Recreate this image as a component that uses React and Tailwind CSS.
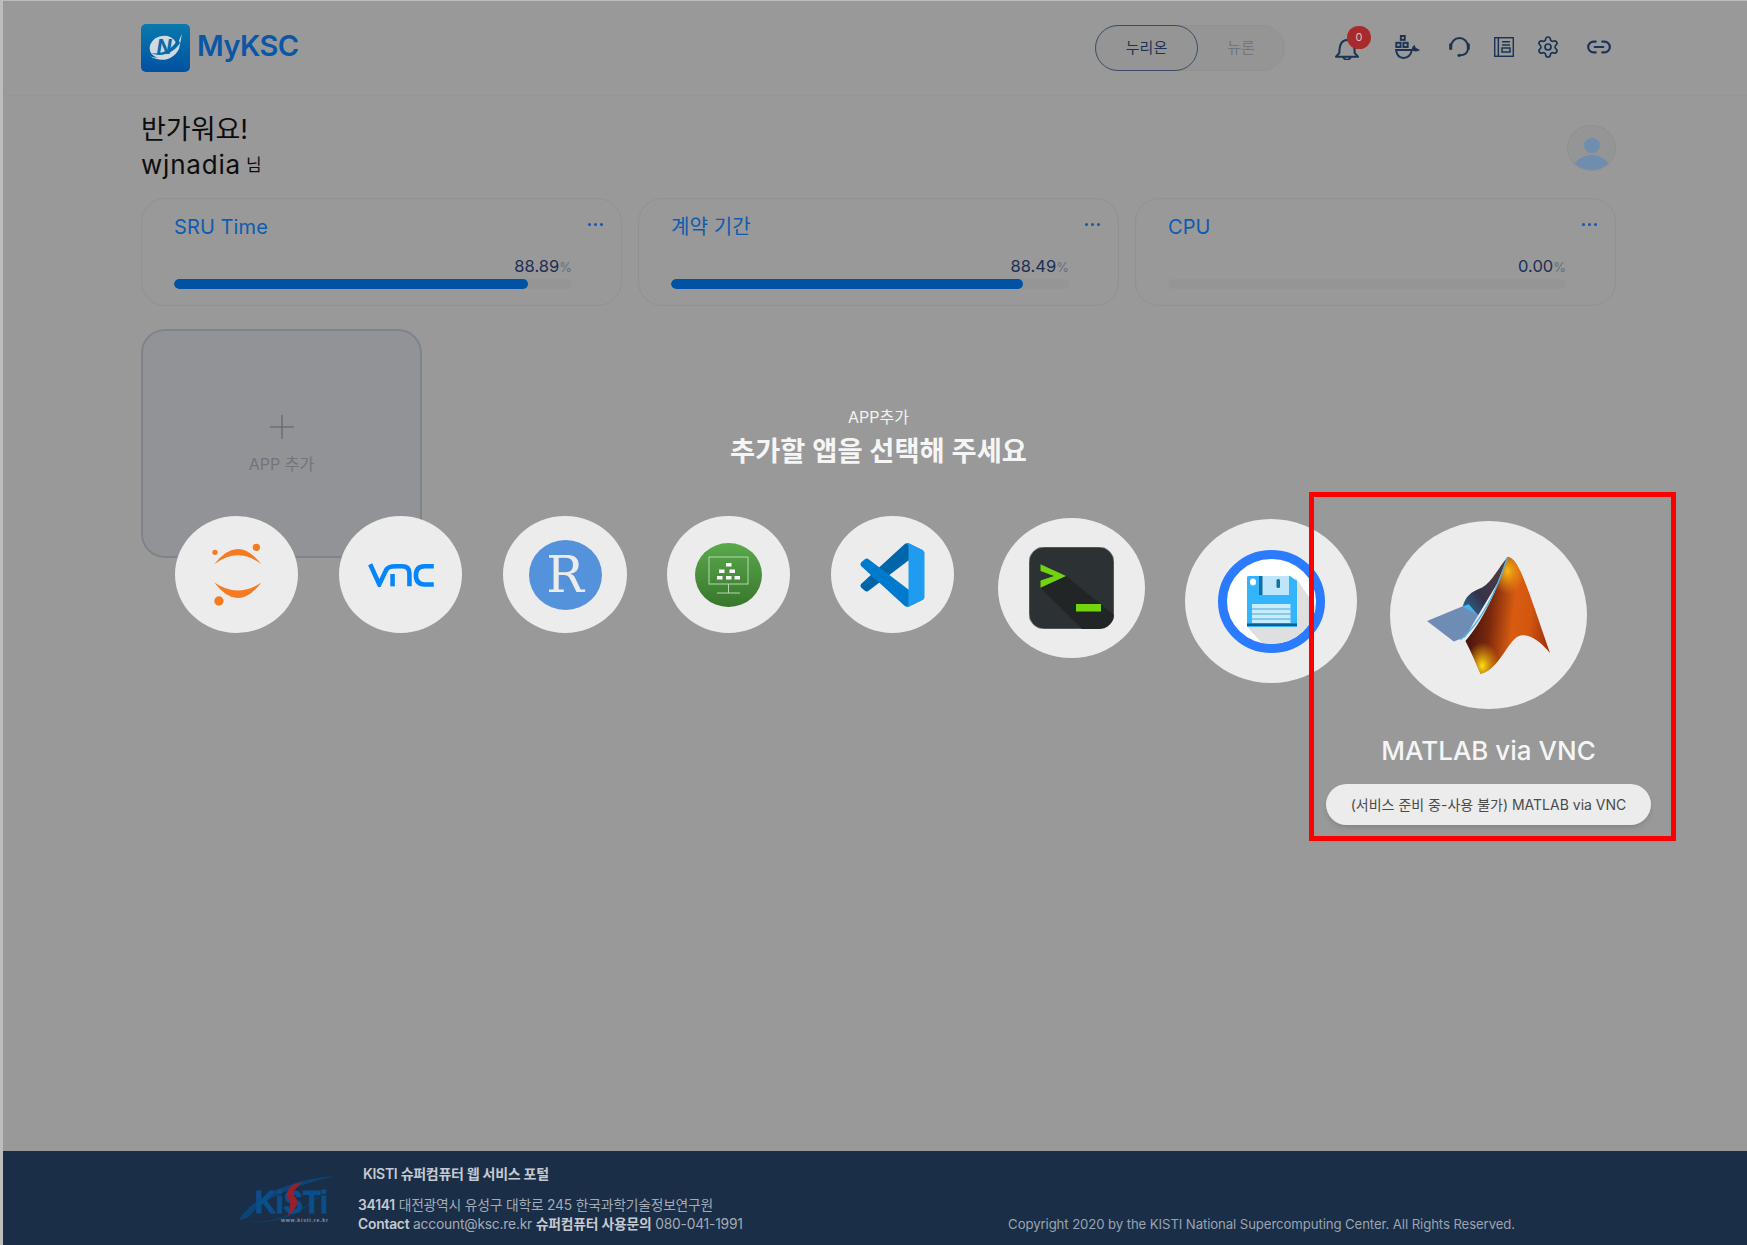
import React from "react";
import { Settings, Link2 } from "lucide-react";

const FONT = "[font-family:Inter,'Noto_Sans_CJK_KR',sans-serif]";

function Bell() {
  return (
    <svg width="24" height="21" viewBox="0 0 72 63" fill="none" stroke="#1c3354" strokeWidth="6" strokeLinejoin="round">
      <path d="M13 42C13 15 20 3 36 3C52 3 59 15 59 42L69 53H3Z" />
      <path d="M25 53A11 9 0 0 0 47 53" />
    </svg>
  );
}
function Docker() {
  return (
    <svg width="26" height="24" viewBox="0 0 78 74" fill="none" stroke="#1c3354" strokeWidth="6">
      <rect x="17" y="3" width="12" height="12" />
      <rect x="3" y="24" width="13" height="13" />
      <rect x="25" y="24" width="13" height="13" />
      <path d="M2 46H51Q46 71 25 71Q6 71 2 46Z" />
      <path d="M50 46C52 36 56 32 60 30C60 35 62 38 64 40L76 46C68 52 58 52 50 46Z" fill="#1c3354" stroke="none" />
    </svg>
  );
}
function Headset() {
  return (
    <svg width="21" height="20" viewBox="0 0 62 60" fill="none" stroke="#1c3354" strokeWidth="6" strokeLinecap="round">
      <path d="M6 28A25 25 0 0 1 56 28" />
      <rect x="0" y="19" width="9" height="20" rx="4" fill="#1c3354" stroke="none" />
      <rect x="53" y="19" width="9" height="20" rx="4" fill="#1c3354" stroke="none" />
      <path d="M56 38Q54 54 32 55" />
      <circle cx="30" cy="55" r="5" fill="#1c3354" stroke="none" />
    </svg>
  );
}
function Book() {
  return (
    <svg width="20" height="20" viewBox="0 0 60 60" fill="none" stroke="#1c3354" strokeWidth="4.5">
      <rect x="2" y="2" width="56" height="56" />
      <path d="M13 2V58" />
      <path d="M24 14H48M24 24H48" />
      <rect x="24" y="33" width="24" height="12" />
    </svg>
  );
}
function Jupyter() {
  return (
    <svg width="53" height="67" viewBox="150 124 160 200">
      <path d="M163 193Q234 101 305 193Q234 139 163 193Z" fill="#f57a20" />
      <path d="M163 248Q234 342 305 248Q234 296 163 248Z" fill="#f57a20" />
      <circle cx="165" cy="157" r="8" fill="#f57a20" />
      <circle cx="290" cy="142" r="11" fill="#f57a20" />
      <circle cx="177" cy="304" r="14" fill="#f57a20" />
    </svg>
  );
}
function Vnc() {
  return (
    <svg width="68" height="24" viewBox="620 188 206 74" fill="none" stroke="#0485fb" strokeWidth="14">
      <path d="M628 192L656 254L678 208Q686 198 706 198H726Q749 198 749 220V260" />
      <path d="M697 260V222" />
      <path d="M824 198H796Q769 198 769 226Q769 254 796 254H824" />
    </svg>
  );
}
function RLogo() {
  return (
    <div className="w-[73px] h-[70px] rounded-[50%] bg-[#5592dc] flex items-center justify-center text-[#ececec] text-[50px] leading-none [font-family:'DejaVu_Serif',serif]">
      R
    </div>
  );
}
function Project() {
  return (
    <svg width="67" height="64" viewBox="0 0 67 64">
      <defs>
        <linearGradient id="gr" x1="0" y1="0" x2="0" y2="1">
          <stop offset="0" stopColor="#5aa94c" />
          <stop offset="1" stopColor="#38762c" />
        </linearGradient>
      </defs>
      <ellipse cx="33.5" cy="32" rx="33.5" ry="32" fill="url(#gr)" />
      <rect x="14" y="14" width="39" height="27" fill="none" stroke="#b5d8ae" strokeWidth="1" />
      <path d="M33.5 41V50M22 50H45" stroke="#b5d8ae" strokeWidth="1" fill="none" />
      <g fill="#fff">
        <rect x="31" y="20" width="5.5" height="3.5" />
        <rect x="24" y="26.5" width="5.5" height="3.5" />
        <rect x="34.5" y="26.5" width="5.5" height="3.5" />
        <rect x="22" y="33" width="5.5" height="3.5" />
        <rect x="31" y="33" width="5.5" height="3.5" />
        <rect x="39.5" y="33" width="5.5" height="3.5" />
      </g>
    </svg>
  );
}
function VSCode() {
  return (
    <svg width="67" height="64" viewBox="0 0 100 100">
      <path fill="#0065A9" d="M96.4614 10.7962L75.8569 0.875542C73.4719 -0.272773 70.6217 0.211611 68.75 2.08333L1.29858 63.5832C-0.515693 65.2373 -0.513607 68.0937 1.30308 69.7452L6.81272 74.754C8.29793 76.1042 10.5347 76.2036 12.1338 74.9905L93.3609 13.3699C96.086 11.3026 100 13.2462 100 16.6667V16.4275C100 14.0265 98.6246 11.8378 96.4614 10.7962Z" />
      <path fill="#007ACC" d="M96.4614 89.2038L75.8569 99.1245C73.4719 100.273 70.6217 99.7884 68.75 97.9167L1.29858 36.4169C-0.515693 34.7627 -0.513607 31.9063 1.30308 30.2548L6.81272 25.246C8.29793 23.8958 10.5347 23.7964 12.1338 25.0095L93.3609 86.6301C96.086 88.6974 100 86.7538 100 83.3334V83.5726C100 85.9735 98.6246 88.1622 96.4614 89.2038Z" />
      <path fill="#1F9CF0" d="M75.8578 99.1263C73.4721 100.274 70.6219 99.7885 68.75 97.9166C71.0564 100.223 75 98.5895 75 95.3278V4.67213C75 1.41039 71.0564 -0.223106 68.75 2.08329C70.6219 0.211402 73.4721 -0.273666 75.8578 0.873633L96.4587 10.7807C98.6234 11.8217 100 14.0112 100 16.4132V83.5871C100 85.9891 98.6234 88.1786 96.4587 89.2196L75.8578 99.1263Z" />
    </svg>
  );
}
function Terminal() {
  return (
    <svg width="85" height="82" viewBox="0 0 85 82">
      <defs>
        <clipPath id="tc"><rect x="0" y="0" width="85" height="82" rx="15" /></clipPath>
      </defs>
      <rect x="0" y="0" width="85" height="82" rx="15" fill="#2c3134" stroke="#8f8f8f" strokeWidth="0.8" />
      <g clipPath="url(#tc)">
        <polygon points="11.5,40.7 53,82 85,82 85,68 37,29" fill="#212526" />
      </g>
      <polygon points="11.5,17.3 37,29 11.5,40.7 11.5,33.5 25,29 11.5,24" fill="#72d40e" />
      <rect x="47" y="57" width="25" height="7.5" fill="#72d40e" />
    </svg>
  );
}
function Floppy() {
  return (
    <svg width="107" height="103" viewBox="0 0 107 103">
      <defs>
        <clipPath id="fc"><ellipse cx="53.5" cy="51.5" rx="44.5" ry="42.5" /></clipPath>
      </defs>
      <ellipse cx="53.5" cy="51.5" rx="49" ry="47" fill="#fff" stroke="#2a7bff" strokeWidth="9" />
      <polygon points="78,28 112,78 112,110 60,110 29,77" fill="#dfdfdf" clipPath="url(#fc)" />
      <path d="M30 26H72L79 31V77H29V27Z" fill="#34b5fb" />
      <rect x="41" y="26" width="30" height="19" fill="#bde6fb" />
      <rect x="41" y="26" width="3.5" height="19" fill="#0d6fa6" />
      <rect x="58.5" y="29" width="3.5" height="9" rx="1.5" fill="#1b6f9e" />
      <ellipse cx="35" cy="32" rx="3" ry="3.5" fill="#fff" />
      <rect x="34" y="54" width="38.5" height="19" fill="#c7ecfd" />
      <path d="M34 59H72.5M34 64H72.5M34 69H72.5" stroke="#4ba3d3" strokeWidth="1.2" />
      <rect x="29" y="73.5" width="50" height="2.5" fill="#0d5f8f" />
    </svg>
  );
}
const MATLAB_BODY = "M622 230C655 235 680 320 748 518C715 480 690 462 660 465C625 470 600 565 540 580C525 545 510 510 495 482C545 425 590 330 622 230Z";
function Matlab() {
  return (
    <svg width="123" height="118" viewBox="380 228 368 352">
      <defs>
        <linearGradient id="mo" x1="0" y1="0.2" x2="1" y2="0.35">
          <stop offset="0" stopColor="#320f0d" />
          <stop offset="0.33" stopColor="#7a280c" />
          <stop offset="0.6" stopColor="#d85c10" />
          <stop offset="0.8" stopColor="#d2560e" />
          <stop offset="1" stopColor="#a8360c" />
        </linearGradient>
        <radialGradient id="my" cx="0.5" cy="0.12" r="0.2">
          <stop offset="0" stopColor="#f7b814" />
          <stop offset="1" stopColor="#f7a014" stopOpacity="0" />
        </radialGradient>
        <radialGradient id="my2" cx="0.2" cy="0.93" r="0.2">
          <stop offset="0" stopColor="#ffe010" />
          <stop offset="1" stopColor="#ffb010" stopOpacity="0" />
        </radialGradient>
        <linearGradient id="md" x1="0" y1="1" x2="1" y2="0">
          <stop offset="0" stopColor="#2a6ea0" />
          <stop offset="0.35" stopColor="#33344a" />
          <stop offset="1" stopColor="#5e3b3a" />
        </linearGradient>
      </defs>
      <path d="M487 378C495 350 510 335 545 322C575 305 595 260 622 230L590 310L533 405Z" fill="url(#md)" />
      <path d="M380 422L487 378L533 405L495 470L460 483Z" fill="#6f8db4" />
      <path d={MATLAB_BODY} fill="url(#mo)" />
      <path d={MATLAB_BODY} fill="url(#my)" />
      <path d={MATLAB_BODY} fill="url(#my2)" />
      <path d="M480 478C540 430 590 330 620 232" fill="none" stroke="#4cb2e6" strokeWidth="4" />
      <path d="M487 378L505 372L533 405Z" fill="#45b4ea" />
    </svg>
  );
}
function LogoMark() {
  return (
    <svg width="49" height="48" viewBox="0 0 49 48">
      <defs>
        <linearGradient id="lg" x1="0" y1="0" x2="0" y2="1">
          <stop offset="0" stopColor="#0a79ad" />
          <stop offset="1" stopColor="#0051a2" />
        </linearGradient>
      </defs>
      <rect width="49" height="48" rx="5" fill="url(#lg)" />
      <ellipse cx="22" cy="23" rx="13.5" ry="11" fill="#cfd9e2" transform="rotate(-15 22 23)" />
      <path d="M9 32C20 37 33 30 40 12L41 10L38 25C31 38 18 38 9 32Z" fill="#cfd9e2" />
      <path d="M10 29C20 31 31 26 37 15L39 19C33 29 20 34 10 29Z" fill="#0a6aa8" />
      <text x="23" y="30" textAnchor="middle" fontSize="20" fontWeight="700" fontStyle="italic" fill="#0a6aa8" fontFamily="Inter, sans-serif">N</text>
    </svg>
  );
}
function Kisti() {
  return (
    <svg width="120" height="70" viewBox="0 0 120 70">
      <path d="M9 55C20 35 55 15 104 11C70 20 35 32 24 46C20 52 14 55 9 55Z" fill="#0c4476" />
      <path d="M9 55C40 62 85 45 104 11C90 40 50 66 9 55Z" fill="#0c4476" opacity="0.6" />
      <text x="25" y="48" fontSize="31" fontWeight="700" fill="#0a4f8c" stroke="#0a4f8c" strokeWidth="0.9" fontFamily="'Liberation Sans', sans-serif" textLength="73" lengthAdjust="spacingAndGlyphs">KiSTi</text>
      <path d="M62 20L72 17C65 24 61 28 66 33C69 38 66 44 58 51C60 43 62 38 57 32C56 27 59 23 62 20Z" fill="#97202f" />
      <text x="51" y="57" fontSize="5.2" fontWeight="700" fill="#8b97a6" fontFamily="'Liberation Sans', sans-serif" textLength="47">www.kisti.re.kr</text>
    </svg>
  );
}

const cards = [
  { title: "SRU Time", value: "88.89", pct: 88.9 },
  { title: "계약 기간", value: "88.49", pct: 88.5 },
  { title: "CPU", value: "0.00", pct: 0 },
];

function StatCard({ title, value, pct }) {
  return (
    <div className="relative h-[108px] rounded-[24px] border border-[#8f9193] pl-[32px] pr-[49px] pt-[14px]">
      <div className="text-[20px] leading-[28px] text-[#0d5cb0] tracking-[0.1px]">{title}</div>
      <div className="absolute right-[18px] top-[24px] flex gap-[3px]">
        <span className="w-[3px] h-[3px] rounded-full bg-[#1557a8]" />
        <span className="w-[3px] h-[3px] rounded-full bg-[#1557a8]" />
        <span className="w-[3px] h-[3px] rounded-full bg-[#1557a8]" />
      </div>
      <div className="mt-[14px] flex justify-end items-baseline text-[16.5px] leading-[22px] text-[#1a2f55]">
        {value}
        <span className="text-[13px] text-[#64707f]">%</span>
      </div>
      <div className="mt-[1px] h-[10px] rounded-full bg-[#939597] overflow-hidden">
        <div className="h-full rounded-full bg-[#0052a4]" style={{ width: `${pct}%` }} />
      </div>
    </div>
  );
}

function Circle({ w, h, ml, mt, children }) {
  return (
    <div
      className="shrink-0 rounded-[50%] bg-[#ececec] flex items-center justify-center"
      style={{ width: w, height: h, marginLeft: ml, marginTop: mt }}
    >
      {children}
    </div>
  );
}

export default function App() {
  return (
    <div className={`relative w-[1747px] h-[1245px] overflow-hidden bg-[#999999] border-l-[3px] border-t border-[#bdbdbd] flex flex-col ${FONT}`}>
      <header className="h-[95px] shrink-0 border-b border-[#969696] pl-[138px] pr-[134px] flex items-center">
        <LogoMark />
        <span className="ml-[7px] -mt-[5px] text-[29px] font-semibold leading-none tracking-[-0.6px] text-[#0b56a5]">MyKSC</span>
        <div className="ml-auto flex items-center w-[190px] h-[46px] rounded-full border border-[#929292] bg-[#959595]">
          <div className="w-[103px] h-[46px] -ml-px rounded-full border border-[#3a4d68] flex items-center justify-center text-[15px] text-[#1c3354]">누리온</div>
          <div className="w-[86px] flex items-center justify-center text-[15px] text-[#6f7782]">뉴론</div>
        </div>
        <div className="relative ml-[48px] w-[28px] flex justify-center mt-[2px]">
          <Bell />
          <span className="absolute left-[14px] -top-[13px] w-[24px] h-[23px] rounded-full bg-[#a82a2c] text-[#d9c4c4] text-[11px] flex items-center justify-center">0</span>
        </div>
        <div className="ml-[33px] w-[28px] flex justify-center -mt-[2px]"><Docker /></div>
        <div className="ml-[23px] w-[28px] flex justify-center -mt-[3px]"><Headset /></div>
        <div className="ml-[17px] w-[28px] flex justify-center -mt-[2px]"><Book /></div>
        <div className="ml-[16px] w-[28px] flex justify-center -mt-[3px]"><Settings size={24} strokeWidth={1.7} color="#1c3354" /></div>
        <div className="ml-[23px] w-[28px] flex justify-center -mt-[3px]"><Link2 size={26} strokeWidth={2} color="#1c3354" /></div>
      </header>

      <main className="flex-1 pl-[138px] pr-[131px]">
        <div className="flex justify-between items-start">
          <div>
            <div className="mt-[16px] text-[27px] leading-[36px] text-[#0d0d0d]">반가워요!</div>
            <div className="text-[26px] leading-[34px] text-[#0d0d0d] tracking-[0.8px]">
              wjnadia <span className="text-[17px] align-[3px] -ml-[3px]">님</span>
            </div>
          </div>
          <div className="relative mt-[29px] w-[49px] h-[46px] rounded-[50%] border border-[#8e9092] overflow-hidden bg-[#959595]">
            <div className="absolute left-[16px] top-[12px] w-[16px] h-[15px] rounded-full bg-[#6f8dae]" />
            <div className="absolute left-[5px] top-[29px] w-[37px] h-[30px] rounded-[50%] bg-[#6f8dae]" />
          </div>
        </div>

        <div className="mt-[16px] grid grid-cols-3 gap-[16px]">
          {cards.map((c) => (
            <StatCard key={c.title} {...c} />
          ))}
        </div>

        <div className="mt-[23px] w-[281px] h-[229px] rounded-[24px] border-2 border-[#7f848b] bg-[#929396] flex flex-col items-center pt-[84px]">
          <svg width="24" height="24" viewBox="0 0 24 24" stroke="#6b717a" strokeWidth="1.6"><path d="M12 0V24M0 12H24" /></svg>
          <div className="mt-[14px] text-[16px] leading-[22px] text-[#70757d]">APP 추가</div>
        </div>
      </main>

      <footer className="h-[94px] shrink-0 bg-[#1a2e47] flex pl-[227px] pr-[232px]">
        <div className="mt-[14px]"><Kisti /></div>
        <div className="ml-[8px] pt-[13px]">
          <div className="ml-[5px] text-[14px] leading-[20px] font-semibold text-[#c6cad0] tracking-[-0.3px]">KISTI 슈퍼컴퓨터 웹 서비스 포털</div>
          <div className="mt-[12px] text-[13.8px] leading-[18px] text-[#a3abb6] tracking-[-0.2px]">
            <b className="font-semibold text-[#c6cad0]">34141</b> 대전광역시 유성구 대학로 245 한국과학기술정보연구원
          </div>
          <div className="mt-[1px] text-[13.8px] leading-[18px] text-[#a3abb6] tracking-[-0.2px]">
            <b className="font-semibold text-[#c6cad0]">Contact</b> account@ksc.re.kr <b className="font-semibold text-[#c6cad0]">슈퍼컴퓨터 사용문의</b> 080-041-1991
          </div>
        </div>
        <div className="ml-auto self-end mb-[11px] text-[13.2px] leading-[20px] text-[#9aa3af] tracking-[-0.1px]">
          Copyright 2020 by the KISTI National Supercomputing Center. All Rights Reserved.
        </div>
      </footer>

      {/* modal layer over the page */}
      <div className="absolute inset-0 flex flex-col items-center pl-[7px] pt-[406px]">
        <div className="text-[16px] leading-[20px] text-[#f2f2f2]">APP추가</div>
        <div className="mt-[7px] text-[27.3px] leading-[36px] font-semibold text-[#f5f5f5]">추가할 앱을 선택해 주세요</div>
        <div className="self-start mt-[46px] -ml-[7px] pl-[172px] flex items-start">
          <Circle w={123} h={117} ml={0} mt={0}><Jupyter /></Circle>
          <Circle w={123} h={117} ml={41} mt={0}><Vnc /></Circle>
          <Circle w={124} h={117} ml={41} mt={0}><RLogo /></Circle>
          <Circle w={123} h={117} ml={40} mt={0}><Project /></Circle>
          <Circle w={123} h={117} ml={41} mt={0}><VSCode /></Circle>
          <Circle w={147} h={140} ml={44} mt={2}><Terminal /></Circle>
          <Circle w={172} h={164} ml={40} mt={3}><Floppy /></Circle>
          <div className="shrink-0 w-[197px] ml-[33px] mt-[5px] flex flex-col items-center">
            <Circle w={197} h={188} ml={0} mt={0}><Matlab /></Circle>
            <div className="mt-[24px] whitespace-nowrap text-[26px] leading-[36px] font-medium text-[#f5f5f5]">MATLAB via VNC</div>
            <div className="mt-[15px] shrink-0 w-[325px] h-[41px] rounded-full bg-[#ececec] shadow-md flex items-center justify-center whitespace-nowrap text-[14px] text-[#4a4a4a]">
              (서비스 준비 중-사용 불가) MATLAB via VNC
            </div>
          </div>
        </div>
      </div>

      {/* red annotation frame */}
      <div className="absolute left-[1306px] top-[491px] w-[367px] h-[349px] border-[5px] border-[#fe0000]" />
    </div>
  );
}
